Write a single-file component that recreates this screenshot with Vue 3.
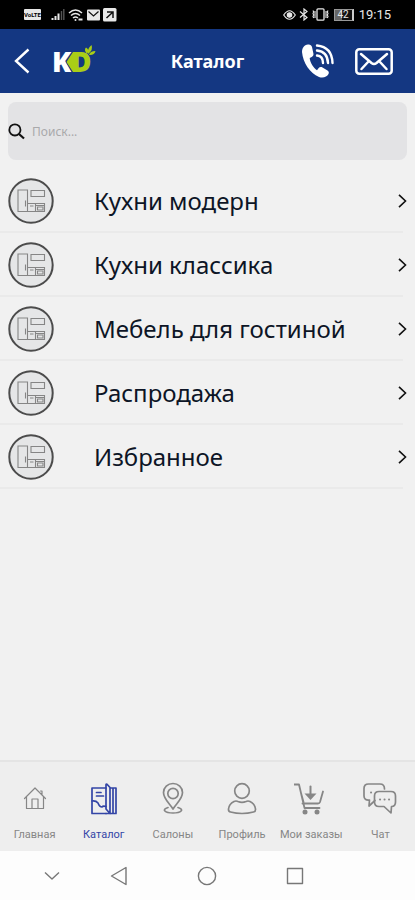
<script setup>
import { ref } from 'vue'

const query = ref('')
const categories = ['Кухни модерн', 'Кухни классика', 'Мебель для гостиной', 'Распродажа', 'Избранное']
const tabs = [
  { id: 'home', label: 'Главная' },
  { id: 'catalog', label: 'Каталог' },
  { id: 'salons', label: 'Салоны' },
  { id: 'profile', label: 'Профиль' },
  { id: 'orders', label: 'Мои заказы' },
  { id: 'chat', label: 'Чат' },
]
const active = ref('catalog')
</script>

<template>
  <div class="screen">
    <div class="status">
      <div class="status-group">
        <span class="volte">VoLTE</span>
        <svg class="signal" width="14" height="14" viewBox="0 0 14 14" aria-hidden="true">
          <path d="M1.5 10v2M4.5 8v4M7.5 5.500v6.500" stroke="#e8e8e8" stroke-width="2" />
          <path d="M10.500 3v9M12.800 1v11" stroke="#555" stroke-width="1.400" />
        </svg>
        <svg width="16" height="14" viewBox="0 0 16 14" fill="none" stroke="#e8e8e8" stroke-width="1.500" aria-hidden="true">
          <path d="M1 5Q7.500-1 14 5M3 7.500Q7.500 3.500 12 7.500M5 10Q7.500 8 10 10" />
          <circle cx="7.500" cy="12" r="1" fill="#e8e8e8" stroke="none" />
          <path d="M10.500 11.500h4" stroke-width="2" />
        </svg>
        <svg width="13" height="12" viewBox="0 0 13 12" aria-hidden="true">
          <rect width="13" height="11" y=".5" rx="1" fill="#e8e8e8" />
          <path d="M1.500 2.500l5 4.500 5-4.500" fill="none" stroke="#111" stroke-width="1.200" />
        </svg>
        <svg width="14" height="14" viewBox="0 0 14 14" aria-hidden="true">
          <rect width="13.500" height="13.500" rx="1.500" fill="#e8e8e8" />
          <path d="M4 4h6v6M10 4l-6.500 6" fill="none" stroke="#111" stroke-width="1.500" />
        </svg>
      </div>
      <div class="status-group right">
        <svg width="13" height="12" viewBox="0 0 13 12" fill="none" stroke="#e8e8e8" stroke-width="1.200" aria-hidden="true">
          <path d="M.7 6Q6.500-2.500 12.300 6 6.500 14.500.7 6z" />
          <circle cx="6.500" cy="6" r="2.200" fill="#e8e8e8" />
        </svg>
        <svg width="10" height="13" viewBox="0 0 10 13" fill="none" stroke="#e8e8e8" stroke-width="1.200" aria-hidden="true">
          <path d="M1 3.500l7 6L5 12V1l3 2.500-7 6" />
        </svg>
        <svg width="17" height="13" viewBox="0 0 17 13" fill="none" stroke="#e8e8e8" stroke-width="1.300" aria-hidden="true">
          <rect x="5" y=".8" width="7" height="11.400" rx="1" />
          <path d="M3 3v7M1 2.500l.7 1.500-.7 1.500.7 1.500-.7 1.500.7 1.500M14 3v7M16 2.500l-.7 1.500.7 1.500-.7 1.500.7 1.500-.7 1.500" stroke-width="1.100" />
        </svg>
        <span class="battery"><span class="level">42</span></span>
        <span class="clock">19:15</span>
      </div>
    </div>

    <header class="header">
      <div class="brand">
        <button class="icon-btn" type="button" aria-label="Назад">
          <svg width="16" height="26" viewBox="0 0 16 26" fill="none" stroke="#fff" stroke-width="2.400">
            <path d="M14.500 1.500L2 13l12.500 11.500" />
          </svg>
        </button>
        <svg class="logo" width="48" height="42" viewBox="0 0 48 42" role="img" aria-label="KD">
          <text class="logo-k" x="0" y="32">K</text>
          <path d="M21 12L14.500 22l6.500 10h4V12z" fill="#a9ce16" stroke="#143782" stroke-width="1.200" paint-order="stroke" />
          <text class="logo-d" x="19" y="32">D</text>
          <path d="M35 14Q31.500 10 34 7.500q4 2.500 1 6.500zM36 14q-1-5.500 3.500-9Q41.500 10 36 14zM37 15q1-4 6.500-4-1 4.500-6.500 4z" fill="#a9ce16" />
        </svg>
      </div>
      <h1 class="title">Каталог</h1>
      <div class="actions">
        <button class="icon-btn" type="button" aria-label="Позвонить">
          <svg width="34" height="36" viewBox="0 0 34 36">
            <path d="M7 1.500C3 2 1 5 1 9c1 11 8 21 17 25 4 1.500 8 0 9.500-3 .7-1.500.3-2.500-1-3.500l-5-3c-1.500-.8-3-.5-4 .7l-1.500 2C12.500 25 9 19.500 8.700 15l2-1c1.500-.8 2-2 1.700-3.500L11 4C10.500 2 9 1.200 7 1.500z" fill="#fff" />
            <path d="M16 12.500q6 .5 6 7.500M16 7.500q10.500 1 11 12.500M16 2.500q15 1.500 15.500 17.500" fill="none" stroke="#fff" stroke-width="2.400" stroke-linecap="round" />
          </svg>
        </button>
        <button class="icon-btn" type="button" aria-label="Сообщения">
          <svg width="38" height="27" viewBox="0 0 38 27" fill="none" stroke="#fff" stroke-width="2.500" stroke-linecap="round" stroke-linejoin="round">
            <rect x="1.300" y="1.300" width="35.400" height="24.400" rx="3" />
            <path d="M6 6l10.500 9q2.500 2 5 0L32 6M6.500 21l7-7.500M31.500 21l-7-7.500" />
          </svg>
        </button>
      </div>
    </header>

    <main class="content">
      <label class="search">
        <svg width="17" height="17" viewBox="0 0 17 17" fill="none" stroke="#111" stroke-width="1.800" aria-hidden="true">
          <circle cx="6.900" cy="6.900" r="5.600" />
          <path d="M11 11l5 4.500" stroke-width="2.200" />
        </svg>
        <input v-model="query" type="text" placeholder="Поиск..." aria-label="Поиск" />
      </label>
      <ul class="list">
        <li v-for="name in categories" :key="name">
          <a class="row" href="#">
            <svg class="badge" width="46" height="46" viewBox="0 0 46 46" fill="none" aria-hidden="true">
              <circle cx="23" cy="23" r="21.700" fill="#e5e6e7" stroke="#4c4c4c" stroke-width="2" />
              <g stroke="#858585" stroke-width="1.100">
                <path d="M10 12h9.500v21.500H10zM23 12.500h13.500v6H23zM19.500 25.500h17v8h-17zM27.500 25.500v8M22 28h3.500" />
                <path d="M17.500 22.500v6M28 27.500h8.500M29.500 29h5.500v3h-5.500z" />
              </g>
            </svg>
            <span class="name">{{ name }}</span>
            <svg width="9" height="14" viewBox="0 0 9 14" fill="none" stroke="#111" stroke-width="1.600" aria-hidden="true">
              <path d="M1 .8L7.500 7 1 13.200" />
            </svg>
          </a>
        </li>
      </ul>
    </main>

    <nav class="tabs">
      <button
        v-for="tab in tabs"
        :key="tab.id"
        type="button"
        class="tab"
        :class="{ active: tab.id === active }"
        @click="active = tab.id"
      >
        <svg class="tab-icon" width="34" height="34" viewBox="0 0 34 34" fill="none" stroke="currentColor" stroke-width="1.500" stroke-linejoin="round" stroke-linecap="round" aria-hidden="true">
          <g v-if="tab.id === 'home'" stroke-width="1.200">
            <path d="M6.500 17.500L17 7l10.500 10.500M8.500 16v11.500h17V16M14 27.500v-9.500h6v9.500M22.500 10h1.500v4" />
          </g>
          <g v-else-if="tab.id === 'catalog'" stroke-width="1.700">
            <path d="M19 7H5v25.500h14" />
            <path d="M19 4.500V28l4 4.500V6.500L20 3.200q-1-.5-1 .8zM23.500 7H29v25.500H19M26 7v25.500M9.500 11.500h4.500M9.500 15h7" />
            <path d="M5 20q4-.5 6 2 1.500 4 4 4 1-1.500 4-.5" />
          </g>
          <g v-else-if="tab.id === 'salons'" stroke-width="1.700">
            <path d="M17 28C14 23 7.500 18 7.500 11.500a9.500 9 0 0119 0C26.500 18 20 23 17 28z" />
            <circle cx="17" cy="12.500" r="5.200" />
            <path d="M12 26.500c-7 2-3 5.500 5 5.500s12-3.500 5-5.500" />
          </g>
          <g v-else-if="tab.id === 'profile'" stroke-width="1.700">
            <circle cx="17" cy="10" r="7.300" />
            <path d="M9 20.500q2-1 4 0 4 1.800 8 0 2-1 4 0Q30 23 30.500 28q.2 2.500-2 3Q17 34 5.500 31q-2.200-.5-2-3Q4 23 9 20.500z" />
          </g>
          <g v-else-if="tab.id === 'orders'" transform="translate(-2 0)" stroke-width="1.800">
            <path d="M1.500 3.500H7L12.500 27h15M10.500 22.500h15.500q1.500 0 2-1.500L31 10.500M9 12l2.500 9" />
            <path d="M18.500 5.500v8" stroke-width="2" />
            <path d="M12.500 12.500h12L18.500 19z" fill="currentColor" stroke="none" />
            <circle cx="13" cy="31" r="2.500" fill="currentColor" stroke="none" />
            <circle cx="25" cy="31" r="2.500" fill="currentColor" stroke="none" />
          </g>
          <g v-else stroke-width="1.700">
            <path d="M12 19.500L6 25l.5-6Q1 19.500 1 15V7.500Q1 3 5.500 3H17q4.500 0 4.500 5" />
            <path d="M16 10.500h12q4.500 0 4.500 4.500v6q0 4.500-4 4.500l-.5 6.500-7-6.500h-5q-4.500 0-4.500-4.500v-6q0-4.500 4.500-4.500z" />
            <path d="M8 11.500h.1M17 18.500h.1M21.500 18.500h.1M26 18.500h.1" stroke-width="2" />
          </g>
        </svg>
        <span class="tab-label">{{ tab.label }}</span>
      </button>
    </nav>

    <div class="system">
      <button type="button" class="icon-btn" aria-label="Скрыть">
        <svg width="16" height="10" viewBox="0 0 16 10"><path d="M1 1.500l7 6.500 7-6.500" /></svg>
      </button>
      <button type="button" class="icon-btn" aria-label="Назад">
        <svg width="18" height="20" viewBox="0 0 18 20"><path d="M16 1.500v17L1.500 10z" /></svg>
      </button>
      <button type="button" class="icon-btn" aria-label="Домой">
        <svg width="20" height="20" viewBox="0 0 20 20"><circle cx="10" cy="10" r="8.600" /></svg>
      </button>
      <button type="button" class="icon-btn" aria-label="Недавние">
        <svg width="18" height="18" viewBox="0 0 18 18"><rect x="1.500" y="1.500" width="15" height="15" /></svg>
      </button>
    </div>
  </div>
</template>

<style>
body {
  margin: 0;
  background: #f1f1f1;
}
</style>

<style scoped>
.screen {
  display: flex;
  flex-direction: column;
  min-height: 100vh;
  background: #f1f1f1;
  font-family: "Noto Sans", sans-serif;
}
.screen svg {
  display: block;
  flex: none;
}
.status {
  display: flex;
  align-items: center;
  justify-content: space-between;
  height: 29px;
  padding: 0 24px;
  background: #000;
  color: #e8e8e8;
  font-family: Roboto, sans-serif;
}
.status-group {
  display: flex;
  align-items: center;
  gap: 3px;
}
.volte {
  width: 17px;
  margin-right: 7px;
  border-radius: 1px;
  background: #e8e8e8;
  color: #000;
  font-size: 6px;
  font-weight: 700;
  line-height: 11px;
  text-align: center;
}
.battery {
  box-sizing: border-box;
  width: 20px;
  margin-left: 2px;
  border: 1px solid #999;
  border-right: 2px solid #ccc;
  background: linear-gradient(90deg, #666 42%, #111 42%);
  font-size: 10px;
  line-height: 10px;
  text-align: center;
}
.clock {
  margin-left: 2px;
  font-size: 13px;
  line-height: 16px;
}
.header {
  display: grid;
  grid-template-columns: 1fr auto 1fr;
  align-items: center;
  height: 64px;
  padding: 0 14px;
  background: #143782;
  color: #fff;
}
.brand,
.actions {
  display: flex;
  align-items: center;
}
.brand {
  gap: 22px;
}
.actions {
  justify-content: flex-end;
  gap: 20px;
  padding-right: 8px;
}
.icon-btn {
  display: flex;
  padding: 0;
  border: 0;
  background: none;
  cursor: pointer;
}
.logo-k,
.logo-d {
  font: 800 28px "Open Sans", sans-serif;
}
.logo-k {
  fill: #fff;
}
.logo-d {
  fill: #a9ce16;
}
.title {
  margin: 0;
  font-size: 18px;
  font-weight: 700;
  line-height: 24px;
}
.content {
  flex: 1;
  padding-top: 9px;
}
.search {
  display: flex;
  align-items: center;
  gap: 7px;
  height: 58px;
  margin: 0 8px 9px;
  border-radius: 8px;
  background: #e3e3e5;
}
.search input {
  flex: 1;
  min-width: 0;
  padding: 0;
  border: 0;
  outline: 0;
  background: none;
  color: #111;
  font: 12px "Noto Sans", sans-serif;
}
.search input::placeholder {
  color: #a9a9ab;
  opacity: 1;
}
.list {
  margin: 0;
  padding: 0;
  list-style: none;
}
.row {
  display: flex;
  align-items: center;
  box-sizing: border-box;
  height: 64px;
  padding: 0 8px;
  background: linear-gradient(#eaeaea, #eaeaea) left bottom / calc(100% - 12px) 2px no-repeat;
  color: #0d1526;
  text-decoration: none;
}
.badge {
  margin-right: 40px;
}
.name {
  flex: 1;
  font-size: 24px;
  line-height: 34px;
}
.tabs {
  display: grid;
  grid-template-columns: repeat(6, minmax(0, 1fr));
  border-top: 2px solid #e4e4e4;
  background: #eee;
}
.tab {
  display: flex;
  flex-direction: column;
  align-items: center;
  gap: 12px;
  padding: 19px 0 8px;
  border: 0;
  background: none;
  color: #868686;
  cursor: pointer;
}
.tab.active {
  color: #3345a6;
}
.tab-label {
  font: 11px/16px Roboto, sans-serif;
  white-space: nowrap;
}
.system {
  display: grid;
  grid-template-columns: 88px 46px 130px 46px;
  align-items: center;
  height: 49px;
  padding-left: 8px;
  background: #fdfdfd;
}
.system .icon-btn {
  justify-self: center;
}
.system svg {
  fill: none;
  stroke: #777;
  stroke-width: 1.400;
  stroke-linejoin: round;
}
</style>
